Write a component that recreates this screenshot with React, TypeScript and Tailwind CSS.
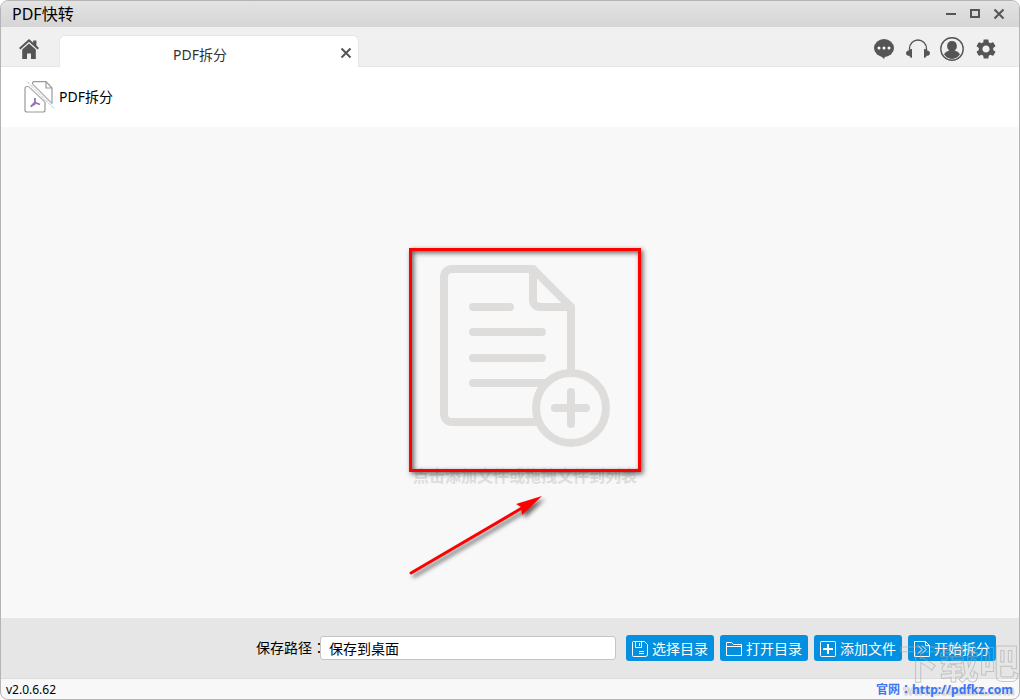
import React, { useState } from "react";

type ToolButtonProps = {
  label: string;
  icon: React.ReactNode;
};

const winButton = "flex size-6 items-center justify-center text-[#555]";

function HomeIcon() {
  return (
    <svg className="size-5" viewBox="0 0 20 20" fill="#555">
      <path d="M10 0 0 9l1.4 1.5L10 2.8l8.6 7.7L20 9l-2.6-2.4V1.4h-3.2v2.4z" />
      <path d="M10 4.4 3.2 10.4V20H8v-5.4h4V20h4.800v-9.600z" />
    </svg>
  );
}

function ChatIcon() {
  return (
    <svg className="size-6" viewBox="0 0 24 24">
      <ellipse cx="12" cy="11" rx="10" ry="9" fill="#555" />
      <path d="M8.500 18.500 12 22l1-2.500 3-1z" fill="#555" />
      <circle cx="7" cy="11" r="1.500" fill="#fff" />
      <circle cx="12" cy="11" r="1.500" fill="#fff" />
      <circle cx="17" cy="11" r="1.500" fill="#fff" />
    </svg>
  );
}

function HeadsetIcon() {
  return (
    <svg className="size-6" viewBox="0 0 24 24" fill="#555">
      <path d="M3.500 14v-2.500a8.500 8.500 0 0 1 17 0V14" fill="none" stroke="#555" strokeWidth="1.300" />
      <path d="M6 12v9C4 20.800 3.600 19.500 3.400 18.800 1.500 19 0 17.800 0 16.200s1.400-3 3.400-2.800C3.600 12.600 4.500 12 6 12z" />
      <path d="M18 12v9c2-.2 2.400-1.500 2.600-2.200 1.900.2 3.400-1 3.400-2.600s-1.400-3-3.400-2.800C20.400 12.600 19.500 12 18 12z" />
    </svg>
  );
}

function UserIcon() {
  return (
    <svg className="size-6" viewBox="0 0 24 24">
      <circle cx="12" cy="12" r="11.200" fill="#f0f0f0" stroke="#555" strokeWidth="1.400" />
      <path
        d="M12 4c-3 0-4.900 2-4.900 4.900 0 2 .9 3.800 2.300 4.700-2.600.7-4.800 2-5.300 4A10 10 0 0 0 12 22a10 10 0 0 0 7.900-4.400c-.5-2-2.700-3.300-5.300-4 1.400-.9 2.300-2.700 2.300-4.700C16.900 6 15 4 12 4z"
        fill="#555"
      />
    </svg>
  );
}

function GearIcon() {
  return (
    <svg className="size-6" viewBox="0 0 24 24" fill="#555">
      <path d="M19.140 12.940c.04-.3.060-.61.060-.94 0-.32-.02-.64-.07-.94l2.030-1.580a.49.49 0 0 0 .12-.61l-1.920-3.320a.488.488 0 0 0-.59-.22l-2.390.96c-.5-.38-1.030-.7-1.620-.94l-.36-2.540a.484.484 0 0 0-.48-.41h-3.840c-.24 0-.43.17-.47.41l-.36 2.540c-.59.240-1.130.57-1.620.94l-2.390-.96c-.22-.08-.47 0-.59.22L2.740 8.870c-.12.21-.08.47.12.61l2.030 1.580c-.05.3-.09.63-.09.94s.02.64.07.94l-2.030 1.580a.49.49 0 0 0-.12.61l1.920 3.320c.12.22.37.29.59.22l2.390-.96c.5.38 1.030.7 1.620.94l.36 2.540c.05.24.24.41.48.41h3.840c.24 0 .44-.17.47-.41l.36-2.540c.59-.24 1.130-.56 1.620-.94l2.390.96c.22.08.47 0 .59-.22l1.920-3.320c.12-.22.07-.47-.12-.61l-2.010-1.580zM12 15.600c-1.980 0-3.600-1.620-3.600-3.600s1.620-3.600 3.600-3.600 3.600 1.620 3.600 3.600-1.620 3.600-3.600 3.600z" />
    </svg>
  );
}

function CloseIcon() {
  return (
    <svg className="size-3" viewBox="0 0 12 12" fill="none" stroke="#555" strokeWidth="2">
      <path d="M1.500 1.500l9 9M10.500 1.500l-9 9" />
    </svg>
  );
}

function SplitIcon() {
  return (
    <svg className="h-8 w-8" viewBox="0 0 32 32" fill="none" strokeWidth="1.200">
      <path d="M5.500 5.500H4A2 2 0 0 0 2 7.500V29a2 2 0 0 0 2 2h16a2 2 0 0 0 2-2v-8" stroke="#999" />
      <path d="M9.500 3V2A1.500 1.500 0 0 1 11 .6H23L29 7v15.500M23 .5V7h6" stroke="#999" />
      <path d="M5.500 5.500 22 21M9.500 3 29 22.500" stroke="#c3aaa6" />
      <path d="M4 .5l27 27" stroke="#8ed3f0" strokeWidth="1" strokeDasharray="4 1" />
      <path d="M12 17v4.500l-4 4M12 21.500l5 2M7.500 25.500l5-3" stroke="#9473b8" strokeWidth="1.800" />
    </svg>
  );
}

function AddFileIcon() {
  return (
    <svg className="h-[184px] w-[172px]" viewBox="0 0 172 184" fill="none" stroke="#dedddc" strokeWidth="8" strokeLinecap="round" strokeLinejoin="round">
      <path d="M96 158H13a8 8 0 0 1-8-8V13a8 8 0 0 1 8-8h81l38 38v63" />
      <path d="M94 5v31a7 7 0 0 0 7 7h31" />
      <path d="M34 43h37M34 68h69M34 94h69M34 119h72" />
      <circle cx="132" cy="144" r="35" />
      <path d="M116 144h31M132 128v32" />
    </svg>
  );
}

function ToolButton({ label, icon }: ToolButtonProps) {
  return (
    <button type="button" className="flex h-[26px] w-[88px] items-center gap-1 rounded-[3px] bg-[#0490e0] pt-px pl-1.5 text-sm whitespace-nowrap text-white">
      <svg className="size-4 shrink-0" viewBox="0 0 16 16" fill="none" stroke="currentColor">
        {icon}
      </svg>
      {label}
    </button>
  );
}

function Watermark() {
  return (
    <div
      aria-hidden
      className="pointer-events-none absolute right-0 bottom-0 flex flex-col items-center font-bold text-transparent opacity-60"
    >
      <span className="text-[40px] leading-10 [-webkit-text-stroke:1px_#aaa]">下载吧</span>
      <span className="text-xs leading-4 [-webkit-text-stroke:1px_#bbb]">www.xiazaiba.com</span>
    </div>
  );
}

const tools: ToolButtonProps[] = [
  {
    label: "选择目录",
    icon: <path d="M1.500.5h11l3 3v10a2 2 0 0 1-2 2h-12a1 1 0 0 1-1-1v-13a1 1 0 0 1 1-1zM3.500.5v6h6v-6M7.500 2v3M7 10.500h5M7 12.500h5" />,
  },
  { label: "打开目录", icon: <path d="M.5 14.500v-13h5l2 2h8v11zM.5 5.500h15" /> },
  {
    label: "添加文件",
    icon: (
      <>
        <rect x=".5" y=".5" width="15" height="15" rx="1" />
        <path d="M3 8h10M8 3v10" strokeWidth="2" />
      </>
    ),
  },
  {
    label: "开始拆分",
    icon: <path d="M.5.5h11l4 4v11H.5zM11.500.5v4h4M4 4.500l4 4-4 4M8 4.500l4 4-4 4" />,
  },
];

export default function App() {
  const [savePath, setSavePath] = useState("保存到桌面");

  return (
    <div className="relative flex min-h-screen flex-col overflow-hidden rounded-lg border border-[#b4b4b4] bg-[#f8f8f8] font-['Noto_Sans','Noto_Sans_CJK_SC',sans-serif] text-black">
      <header className="flex h-[26px] items-center justify-between bg-linear-to-b from-[#e3e3e3] to-[#d5d5d5] pr-2 pl-[11px]">
        <h1 className="text-base">PDF快转</h1>
        <div className="flex">
          <button type="button" aria-label="最小化" className={winButton}>
            <svg className="size-3" viewBox="0 0 12 12" fill="#555">
              <path d="M1 5h10v2H1z" />
            </svg>
          </button>
          <button type="button" aria-label="最大化" className={winButton}>
            <svg className="size-3" viewBox="0 0 12 12" fill="none" stroke="#555" strokeWidth="2">
              <path d="M2 2h8v7H2z" />
            </svg>
          </button>
          <button type="button" aria-label="关闭" className={winButton}>
            <CloseIcon />
          </button>
        </div>
      </header>

      <nav className="flex h-10 items-end border-b border-[#e5e5e5] bg-[#f0f0f0]">
        <button type="button" aria-label="首页" className="flex h-9 w-[58px] shrink-0 items-center justify-center pt-0.5 pr-0.5">
          <HomeIcon />
        </button>
        <div className="-mb-px flex h-8 w-[300px] items-center rounded-t-md border border-b-0 border-[#e7e7e7] bg-white pt-0.5 pr-1.5">
          <span className="flex-1 pt-1 text-center text-sm text-[#333]">PDF拆分</span>
          <button type="button" aria-label="关闭标签" className="flex size-3 items-center justify-center">
            <CloseIcon />
          </button>
        </div>
        <div className="ml-auto flex h-9 items-center gap-2.5 pt-0.5 pr-[21px]">
          <button type="button" aria-label="消息"><ChatIcon /></button>
          <button type="button" aria-label="客服"><HeadsetIcon /></button>
          <button type="button" aria-label="用户"><UserIcon /></button>
          <button type="button" aria-label="设置"><GearIcon /></button>
        </div>
      </nav>

      <div className="flex h-[60px] items-center gap-1 bg-white pl-[22px] text-sm">
        <SplitIcon />
        <h2>PDF拆分</h2>
      </div>

      <main className="relative flex flex-1 flex-col items-center justify-center pt-1.5 pl-[30px]">
        <button type="button" className="relative flex flex-col items-center gap-4 text-base font-bold text-[#dedddc]">
          <AddFileIcon />
          点击添加文件或拖拽文件到列表
          <span className="absolute -inset-x-1 -top-4 bottom-4 border-3 border-[#f00] shadow-[2px_2px_5px_rgba(0,0,0,0.6),inset_2px_2px_5px_rgba(0,0,0,0.6)]" />
        </button>
        <svg className="absolute bottom-9 left-1/2 h-24 w-40 -translate-x-[110px] drop-shadow-[3px_3px_2px_rgba(0,0,0,0.6)]" viewBox="0 0 160 96">
          <path d="M11 87 122 22" stroke="#f00" strokeWidth="3" strokeLinecap="round" />
          <path d="M142 10 116 18l5 3 1 8z" fill="#f00" />
        </svg>
      </main>

      <section className="flex h-[61px] items-center justify-end border-b border-[#ddd] bg-[#e6e6e6] pr-[23px]">
        <label htmlFor="save-path" className="-mr-1.5 font-['Noto_Sans','Noto_Sans_CJK_JP',sans-serif] text-sm">保存路径：</label>
        <input
          id="save-path"
          value={savePath}
          onChange={(e) => setSavePath(e.target.value)}
          className="relative mr-2.5 h-6 w-[296px] rounded-[3px] border border-[#c4c4c4] bg-white px-2 text-sm"
        />
        <div className="flex gap-1.5">
          {tools.map((t) => (
            <ToolButton key={t.label} {...t} />
          ))}
        </div>
      </section>

      <footer className="flex h-5 items-center justify-between pt-0.5 pr-1.5 pl-[5px] text-xs">
        <span>v2.0.6.62</span>
        <a href="http://pdfkz.com" className="relative z-10 font-['Noto_Sans','Noto_Sans_CJK_JP',sans-serif] font-bold text-[#3b76f6]">官网：http://pdfkz.com</a>
      </footer>

      <Watermark />
    </div>
  );
}
